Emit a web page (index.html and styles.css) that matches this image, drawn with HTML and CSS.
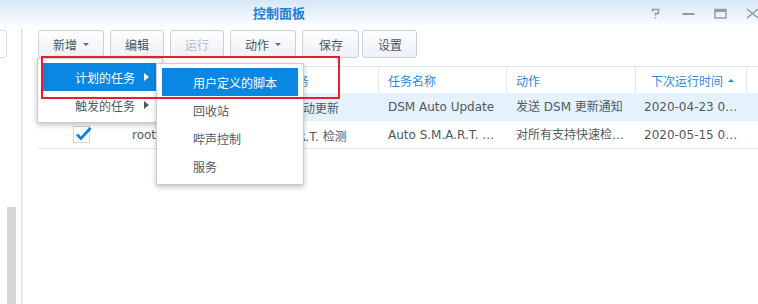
FILE: index.html
```html
<!DOCTYPE html>
<html lang="zh-CN">
<head>
<meta charset="utf-8">
<title>控制面板</title>
<link rel="stylesheet" href="styles.css">
</head>
<body>
<div class="window">
  <div class="titlebar">
    <div class="title">控制面板</div>
    <div class="winbtns">
      <span class="winbtn"><svg width="10" height="11" viewBox="0 0 10 11"><path d="M1.5 3.5V1.5H7.5V5.5H4.5V7.5M4.5 9V10.5" fill="none" stroke="#8f9ba7" stroke-width="1.6"/></svg></span>
      <span class="winbtn"><svg width="13" height="4" viewBox="0 0 13 4"><rect x="0.5" y="1" width="12" height="2" fill="#8f9ba7"/></svg></span>
      <span class="winbtn"><svg width="13" height="11" viewBox="0 0 13 11"><rect x="1" y="1.5" width="11" height="8.5" fill="none" stroke="#8f9ba7" stroke-width="1.4"/><rect x="1" y="1" width="11" height="3" fill="#8f9ba7"/></svg></span>
      <span class="winbtn"><svg width="13" height="11" viewBox="0 0 13 11"><path d="M1 1L12 10M12 1L1 10" fill="none" stroke="#8f9ba7" stroke-width="1.6"/></svg></span>
    </div>
  </div>
  <div class="body">
    <div class="sidebar">
      <div class="search"></div>
      <div class="thumb"></div>
    </div>
    <div class="main">
      <div class="toolbar">
        <div class="btn">新增<span class="caret"></span></div>
        <div class="btn">编辑</div>
        <div class="btn disabled">运行</div>
        <div class="btn">动作<span class="caret"></span></div>
        <div class="btn wide">保存</div>
        <div class="btn tight">设置</div>
      </div>
      <div class="grid">
        <div class="ghead">
          <div class="hc c1">已启动</div>
          <div class="hc c2">用户</div>
          <div class="hc c3">计划任务</div>
          <div class="hc c4">任务名称</div>
          <div class="hc c5">动作</div>
          <div class="hc c6 sorted">下次运行时间<span class="sortarrow"></span></div>
          <div class="hc c7"></div>
        </div>
        <div class="grow selected">
          <div class="gc c1"><span class="check"><svg width="20" height="20" viewBox="0 0 20 20"><path d="M4 10.5L8 14.5L17.5 4" fill="none" stroke="#1c7fd7" stroke-width="2.8"/></svg></span></div>
          <div class="gc c2">root</div>
          <div class="gc c3">DSM 自动更新</div>
          <div class="gc c4">DSM Auto Update</div>
          <div class="gc c5">发送 DSM 更新通知</div>
          <div class="gc c6">2020-04-23 03:00</div>
          <div class="gc c7"></div>
        </div>
        <div class="grow">
          <div class="gc c1"><span class="check"><svg width="20" height="20" viewBox="0 0 20 20"><path d="M4 10.5L8 14.5L17.5 4" fill="none" stroke="#1c7fd7" stroke-width="2.8"/></svg></span></div>
          <div class="gc c2">root</div>
          <div class="gc c3">S.M.A.R.T. 检测</div>
          <div class="gc c4">Auto S.M.A.R.T. …</div>
          <div class="gc c5">对所有支持快速检测的硬盘</div>
          <div class="gc c6">2020-05-15 03:00</div>
          <div class="gc c7"></div>
        </div>
      </div>
    </div>
  </div>

  <div class="menu menu-main">
    <div class="mi active">计划的任务<span class="arrow"></span></div>
    <div class="mi">触发的任务<span class="arrow"></span></div>
  </div>
  <div class="menu menu-sub">
    <div class="mi active">用户定义的脚本</div>
    <div class="mi">回收站</div>
    <div class="mi">哔声控制</div>
    <div class="mi">服务</div>
  </div>
  <div class="mark"></div>
</div>
</body>
</html>
```
FILE: styles.css
```css
html, body {
  margin: 0;
  padding: 0;
  background: #ffffff;
}

.window {
  position: relative;
  width: 758px;
  height: 304px;
  overflow: hidden;
  font-family: "DejaVu Sans", "Noto Sans CJK SC", sans-serif;
  font-size: 12px;
  color: #4e5964;
  background: #ffffff;
}

.titlebar {
  height: 28px;
  display: flex;
  align-items: center;
  background: linear-gradient(#d6e7f7, #ffffff);
  overflow: hidden;
}

.title {
  margin-left: 253px;
  font-family: "Noto Sans CJK SC", sans-serif;
  font-size: 13px;
  font-weight: bold;
  color: #1f7fd8;
  line-height: 28px;
  margin-top: -2px;
}

.winbtns {
  margin-left: auto;
  margin-right: -10px;
  display: flex;
  align-items: center;
}

.winbtn {
  width: 32px;
  height: 28px;
  display: flex;
  align-items: center;
  justify-content: center;
  margin-top: -1px;
}

.body {
  display: flex;
  height: 276px;
}

.sidebar {
  flex: none;
  width: 21px;
  border-right: 1px solid #dedede;
  box-shadow: 1px 0 0 #f2f2f2;
  display: flex;
  flex-direction: column;
}

.search {
  margin-top: 2px;
  width: 7px;
  height: 28px;
  box-sizing: border-box;
  border: 1px solid #d3d9df;
  border-left: none;
  border-radius: 0 3px 3px 0;
}

.thumb {
  margin-top: auto;
  margin-left: 7px;
  width: 9px;
  height: 97px;
  background: #d5d6d8;
}

.main {
  flex: 1;
  min-width: 0;
  padding-left: 16px;
  padding-top: 2px;
}

.toolbar {
  display: flex;
  gap: 6px;
  height: 28px;
}

.btn {
  flex: none;
  height: 28px;
  box-sizing: border-box;
  border: 1px solid #c9d2dc;
  border-radius: 3px;
  background: linear-gradient(#fefefe, #edf1f5);
  padding: 0 14px;
  display: flex;
  align-items: center;
  gap: 6px;
  color: #4b5662;
  font-family: "Noto Sans CJK SC", sans-serif;
  font-size: 12px;
}

.btn.disabled {
  color: #b3bac2;
}

.btn.wide {
  padding: 0 15px 0 16px;
}

.btn.tight {
  margin-left: -3px;
  padding: 0 14px 0 15px;
}

.caret {
  width: 0;
  height: 0;
  border-left: 3px solid transparent;
  border-right: 3px solid transparent;
  border-top: 3px solid #5a6570;
  margin-top: 1px;
}

.grid {
  margin-top: 8px;
  border-top: 1px solid #dbe2e9;
}

.ghead, .grow {
  display: grid;
  grid-template-columns: 86px 128px 127px 128px 129px 111px 1fr;
}

.ghead {
  height: 26px;
}

.hc {
  display: flex;
  align-items: center;
  padding-left: 9px;
  color: #2f88dc;
  font-family: "Noto Sans CJK SC", sans-serif;
  border-right: 1px solid #e1e7ed;
  white-space: nowrap;
  overflow: hidden;
}

.hc.c7 {
  border-right: none;
}

.hc.sorted {
  padding-left: 15px;
}

.sortarrow {
  width: 0;
  height: 0;
  border-left: 3px solid transparent;
  border-right: 3px solid transparent;
  border-bottom: 3px solid #2f88dc;
  margin-left: 5px;
}

.grow {
  height: 28px;
  box-sizing: border-box;
  border-bottom: 1px solid #e5e9ed;
}

.grow.selected {
  background: #e5f2fc;
  border-bottom-color: #e5f2fc;
}

.gc {
  display: flex;
  align-items: center;
  padding: 1px 8px 0;
  min-width: 0;
  overflow: hidden;
  white-space: nowrap;
  color: #4e5964;
}

.gc.c4 {
  padding-left: 9px;
}

.gc.c5 {
  padding-left: 9px;
}

.gc.c5, .gc.c6, .gc.c4 {
  display: block;
  line-height: 27px;
  text-overflow: ellipsis;
}

.gc.c1 {
  justify-content: center;
  padding: 0;
}

.check {
  position: relative;
  width: 17px;
  height: 17px;
  box-sizing: border-box;
  border: 1px solid #c9d4df;
  background: #ffffff;
  margin-left: 1px;
}

.check svg {
  position: absolute;
  left: -1px;
  top: -3px;
}

.menu {
  position: absolute;
  box-sizing: border-box;
  background: #ffffff;
  border: 1px solid #c7cdd4;
  box-shadow: 0 2px 5px rgba(40, 50, 60, 0.3);
  padding: 4px 5px;
  font-family: "Noto Sans CJK SC", sans-serif;
}

.menu-main {
  left: 37px;
  top: 58px;
  width: 126px;
  height: 65px;
  z-index: 2;
}

.menu-sub {
  left: 156px;
  top: 63px;
  width: 148px;
  height: 122px;
  z-index: 3;
}

.mi {
  height: 28px;
  display: flex;
  align-items: center;
  color: #4e5964;
  white-space: nowrap;
}

.menu-main .mi {
  padding-left: 32px;
}

.menu-sub .mi {
  padding-left: 31px;
}

.mi.active {
  background: #0a87e3;
  color: #ffffff;
}

.arrow {
  margin-left: auto;
  margin-right: 8px;
  width: 0;
  height: 0;
  border-top: 4px solid transparent;
  border-bottom: 4px solid transparent;
  border-left: 5px solid #4e5964;
}

.mi.active .arrow {
  border-left-color: #ffffff;
}

.mark {
  position: absolute;
  left: 41px;
  top: 56px;
  width: 299px;
  height: 43px;
  box-sizing: border-box;
  border: 2px solid #e51f2b;
  z-index: 4;
}
```
